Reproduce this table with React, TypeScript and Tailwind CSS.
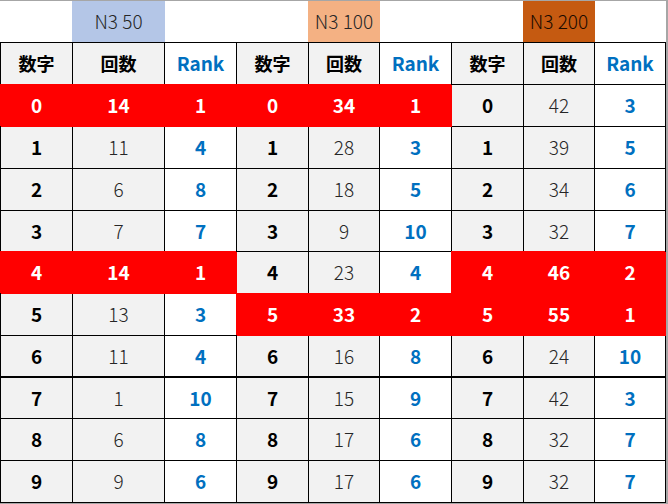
import React from "react";

const GRID = "grid grid-cols-[72px_92px_72px_72px_71px_72px_72px_71px_71px]";

type Group = { counts: number[]; ranks: number[]; red: number[] };

const groups: Group[] = [
  { counts: [14, 11, 6, 7, 14, 13, 11, 1, 6, 9], ranks: [1, 4, 8, 7, 1, 3, 4, 10, 8, 6], red: [0, 4] },
  { counts: [34, 28, 18, 9, 23, 33, 16, 15, 17, 17], ranks: [1, 3, 5, 10, 4, 2, 8, 9, 6, 6], red: [0, 5] },
  { counts: [42, 39, 34, 32, 46, 55, 24, 42, 32, 32], ranks: [3, 5, 6, 7, 2, 1, 10, 3, 7, 7], red: [4, 5] },
];

const heights = ["h-[42px]", "h-[42px]", "h-[42px]", "h-[41px]", "h-[42px]", "h-[42px]", "h-[42px]", "h-[41px]", "h-[42px]", "h-[42px]"];

const FONT = "font-['Noto_Sans_CJK_JP','Noto_Sans',sans-serif]";

const base = "flex items-center justify-center border-r pb-[2px]";
const RED = "bg-[#ff0000] border-[#ff0000] border-b text-white font-bold shadow-[-1px_-1px_0_0_#ff0000]";

function Cell({ kind, red, thick, children }: { kind: "d" | "c" | "r"; red: boolean; thick: boolean; children: React.ReactNode }) {
  let cls: string;
  if (red) {
    cls = `${base} ${RED}`;
  } else {
    const b = thick ? "border-b-2" : "border-b";
    if (kind === "d") cls = `${base} ${b} border-black bg-[#f2f2f2] font-bold text-black`;
    else if (kind === "c") cls = `${base} ${b} border-black bg-[#f2f2f2] font-light text-[#262626]`;
    else cls = `${base} ${b} border-black bg-white font-bold text-[#0070c0]`;
  }
  return <div className={cls}>{children}</div>;
}

export default function App() {
  return (
    <div className={`w-[668px] h-[504px] bg-white border-t border-b border-r-2 border-[#a6a6a6] ${FONT} text-[19px] leading-none`}>
      {/* top label row */}
      <div className={`${GRID} h-[42px] pl-px border-b border-black text-[19px] font-light`}>
        <div />
        <div className="-ml-px flex items-center justify-center pb-[2px] bg-[#b4c6e7] text-[#262626]">N3 50</div>
        <div />
        <div />
        <div className="-ml-px flex items-center justify-center pb-[2px] bg-[#f4b183] text-[#262626]">N3 100</div>
        <div />
        <div />
        <div className="-ml-px flex items-center justify-center pb-[2px] bg-[#c55a11] text-[#1a0a00]">N3 200</div>
        <div />
      </div>
      {/* header row */}
      <div className={`${GRID} h-[42px] border-l border-black text-[18px]`}>
        {groups.map((_, gi) => (
          <React.Fragment key={gi}>
            <div className={`${base} border-b border-black bg-[#f2f2f2] font-bold text-black`}>数字</div>
            <div className={`${base} border-b border-black bg-[#f2f2f2] font-bold text-black`}>回数</div>
            <div className={`${base} border-b border-black bg-white font-bold text-[#0070c0] text-[19px]`}>Rank</div>
          </React.Fragment>
        ))}
      </div>
      {heights.map((h, ri) => (
        <div key={ri} className={`${GRID} ${h} border-l border-black`}>
          {groups.map((g, gi) => {
            const red = g.red.includes(ri);
            const thick = ri === 6;
            return (
              <React.Fragment key={gi}>
                <Cell kind="d" red={red} thick={thick}>{ri}</Cell>
                <Cell kind="c" red={red} thick={thick}>{g.counts[ri]}</Cell>
                <Cell kind="r" red={red} thick={thick}>{g.ranks[ri]}</Cell>
              </React.Fragment>
            );
          })}
        </div>
      ))}
    </div>
  );
}
